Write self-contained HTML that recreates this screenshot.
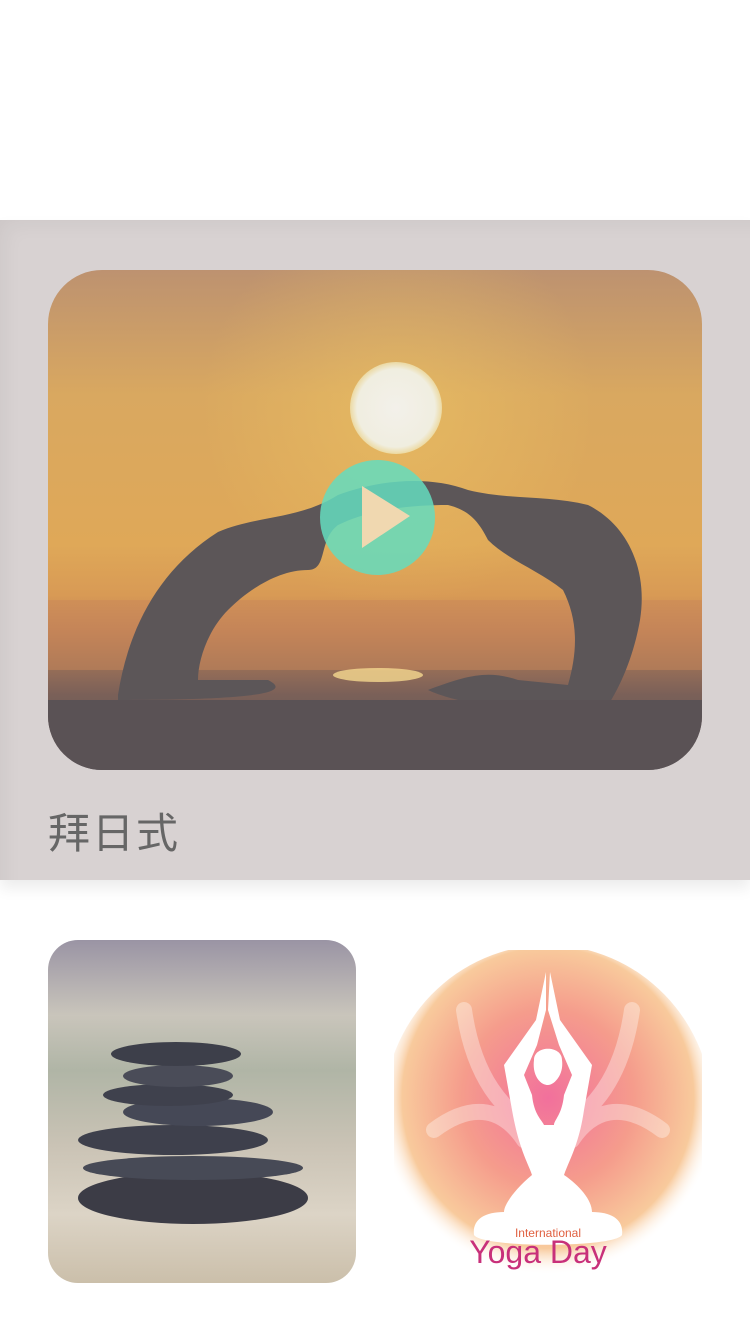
<!DOCTYPE html>
<html><head><meta charset="utf-8"><style>
body{margin:0;width:750px;height:1334px;background:#fff;position:relative;overflow:hidden;font-family:"Liberation Sans","Noto Sans CJK SC",sans-serif}
.card{position:absolute;left:0;top:220px;width:750px;height:660px;background:#d8d2d2;box-shadow:0 8px 14px rgba(0,0,0,.08), inset 14px 14px 20px -10px rgba(0,0,0,.05)}
.img{position:absolute;left:48px;top:270px;width:654px;height:500px;border-radius:54px;overflow:hidden;
background:linear-gradient(180deg,#bd9270 0%,#d9a860 25%,#dfa858 55%,#d89a55 65%,#c08256 72%,#7a6058 85%,#5c5458 100%)}
.sun{position:absolute;left:302px;top:92px;width:92px;height:92px;border-radius:50%;background:radial-gradient(circle,#f3f0ea 0,#f0eee0 60%,rgba(240,220,120,.5) 80%,rgba(230,180,90,0) 100%)}
.glow{position:absolute;left:150px;top:-60px;width:400px;height:400px;border-radius:50%;background:radial-gradient(circle,rgba(240,200,100,.5),rgba(220,170,90,0) 70%)}
.play{position:absolute;width:115px;height:115px;border-radius:50%;background:rgba(100,220,190,.85)}
.t{position:absolute;left:48px;top:800px;font-size:42px;color:#666;letter-spacing:2px}
.stones{position:absolute;left:48px;top:940px;width:308px;height:343px;border-radius:30px;overflow:hidden;background:linear-gradient(180deg,#9a94a4 0%,#c9c5bb 22%,#b0b5a6 38%,#cac3b5 60%,#dcd4c6 80%,#cbbfaa 100%)}
.yoga{position:absolute;left:394px;top:950px;width:308px;height:330px}
</style></head><body>
<div class="card"></div>
<div class="img">
<div class="glow"></div>
<div class="sun"></div>
<svg width="654" height="500" style="position:absolute;left:0;top:0">
<rect x="0" y="330" width="654" height="70" fill="#c9875a" opacity=".5"/>
<ellipse cx="330" cy="405" rx="45" ry="7" fill="#f5d890" opacity=".8"/>
<path d="M70 425 C80 360 110 300 170 262 C210 245 250 250 290 225 C330 210 380 205 420 220 C460 230 500 225 540 235 C580 255 600 300 592 350 C585 390 570 420 560 435 L470 440 C420 435 390 425 380 420 C420 405 440 400 470 410 L520 415 C530 380 530 350 515 320 C490 300 460 290 440 270 C430 250 420 240 400 235 C360 235 320 240 290 255 C270 270 280 300 260 300 C230 300 200 320 180 340 C160 360 150 390 150 410 L220 410 C240 420 230 430 70 430Z" fill="#5c5658"/>
<rect x="0" y="430" width="654" height="70" fill="#5a5255"/>
</svg>
<div class="play" style="left:272px;top:190px"></div>
<svg width="654" height="500" style="position:absolute;left:0;top:0"><path d="M314 216 L362 246 L314 278Z" fill="#f0d8b0"/></svg>
</div>
<div class="t">拜日式</div>
<div class="stones">
<svg width="308" height="343">
<ellipse cx="145" cy="258" rx="115" ry="26" fill="#3c3c46"/>
<ellipse cx="145" cy="228" rx="110" ry="12" fill="#474a56"/>
<ellipse cx="125" cy="200" rx="95" ry="15" fill="#3e404c"/>
<ellipse cx="150" cy="172" rx="75" ry="14" fill="#454856"/>
<ellipse cx="120" cy="155" rx="65" ry="11" fill="#3f414d"/>
<ellipse cx="130" cy="136" rx="55" ry="11" fill="#4a4c58"/>
<ellipse cx="128" cy="114" rx="65" ry="12" fill="#3d3f4a"/>
</svg>
</div>
<div class="yoga">
<svg width="308" height="330">
<defs><radialGradient id="g" cx="50%" cy="45%" r="52%"><stop offset="0" stop-color="#f2709c"/><stop offset=".5" stop-color="#f59c8c"/><stop offset=".85" stop-color="#f8ca9c"/><stop offset="1" stop-color="#fff" stop-opacity="0"/></radialGradient></defs>
<ellipse cx="154" cy="165" rx="165" ry="170" fill="url(#g)"/>
<path d="M40 180 C80 150 110 160 130 190 M268 180 C228 150 198 160 178 190 M70 60 C80 130 110 160 140 180 M238 60 C228 130 198 160 168 180" stroke="#fff" stroke-opacity=".35" stroke-width="16" fill="none" stroke-linecap="round"/>
<path d="M152 22 L142 70 L110 115 L118 160 C125 200 135 215 138 225 C120 240 110 255 110 262 C90 262 78 270 80 285 C88 298 220 298 228 285 C230 270 218 262 198 262 C198 250 185 235 170 225 C175 210 185 195 190 160 L198 115 L166 70 L156 22 L154 60 L165 95 L178 125 L170 145 C168 165 160 170 160 175 L150 175 C148 170 140 165 138 145 L130 125 L143 95 L152 60Z M140 110 C140 95 168 95 168 110 C170 125 160 135 154 135 C146 135 138 125 140 110Z" fill="#fff" fill-rule="nonzero"/>
<text x="154" y="287" text-anchor="middle" font-size="12" fill="#e06040">International</text>
<text x="144" y="313" text-anchor="middle" font-size="32" fill="#c8307a">Yoga Day</text>
</svg>
</div>
</body></html>
